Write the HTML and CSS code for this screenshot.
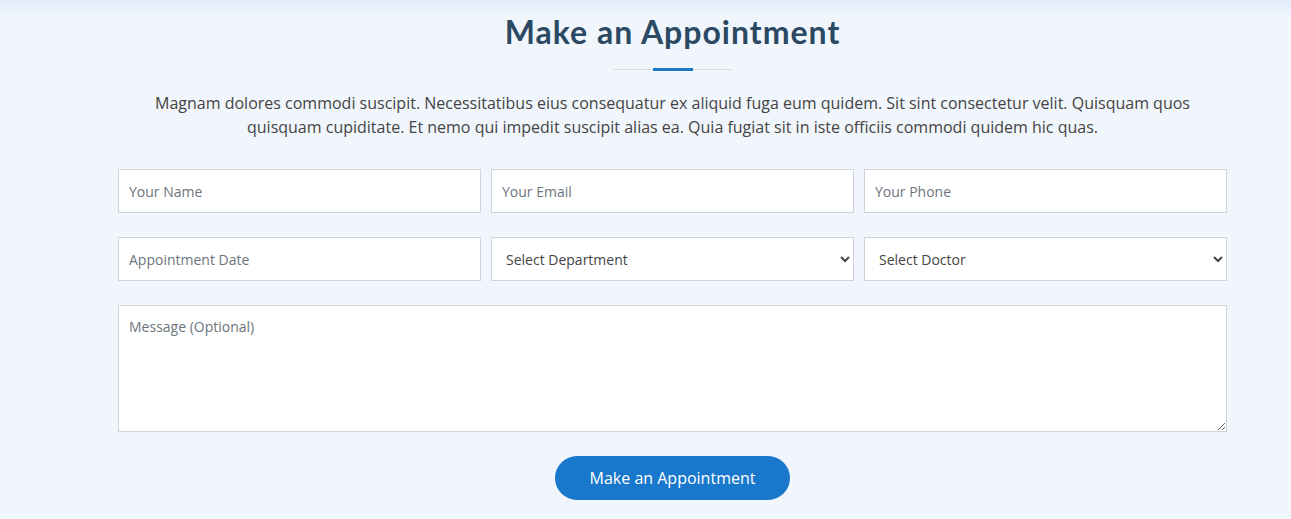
FILE: index.html
```html
<!DOCTYPE html>
<html lang="en">
<head>
<meta charset="utf-8">
<title>Make an Appointment</title>
<link rel="stylesheet" href="styles.css">
</head>
<body>
<section class="appointment">
  <div class="section-title">
    <h2>Make an Appointment</h2>
    <div class="divider"><span class="bar"></span></div>
    <p>Magnam dolores commodi suscipit. Necessitatibus eius consequatur ex aliquid fuga eum quidem. Sit sint consectetur velit. Quisquam quos quisquam cupiditate. Et nemo qui impedit suscipit alias ea. Quia fugiat sit in iste officiis commodi quidem hic quas.</p>
  </div>
  <form class="form">
    <div class="row">
      <input type="text" class="field" placeholder="Your Name">
      <input type="email" class="field" placeholder="Your Email">
      <input type="tel" class="field" placeholder="Your Phone">
    </div>
    <div class="row">
      <input type="text" class="field" placeholder="Appointment Date">
      <select class="field select">
        <option>Select Department</option>
      </select>
      <select class="field select">
        <option>Select Doctor</option>
      </select>
    </div>
    <textarea class="field message" placeholder="Message (Optional)"></textarea>
    <div class="actions">
      <button type="button" class="btn">Make an Appointment</button>
    </div>
  </form>
</section>
</body>
</html>
```
FILE: styles.css
```css
html, body {
  margin: 0;
  padding: 0;
}
body {
  background: linear-gradient(to bottom, #e1ecf8 0px, #f1f6fd 16px, #f1f6fd 100%);
  font-family: "Open Sans", sans-serif;
  color: #444444;
  height: 519px;
  overflow: hidden;
}
.appointment {
  width: 1109px;
  margin-left: 118px;
  padding-top: 12px;
}
.section-title {
  text-align: center;
}
.section-title h2 {
  margin: 0;
  font-family: Lato, "Open Sans", sans-serif;
  font-size: 32px;
  line-height: 40px;
  font-weight: 700;
  letter-spacing: 1px;
  color: #2c4964;
}
.divider {
  position: relative;
  width: 120px;
  height: 1px;
  background: #dddddd;
  margin: 17px auto 0;
}
.divider .bar {
  position: absolute;
  left: 40px;
  top: -1px;
  width: 40px;
  height: 3px;
  background: #1977cc;
}
.section-title p {
  margin: 21px 20px 0;
  font-size: 16px;
  line-height: 24px;
  color: #444444;
}
.form {
  margin-top: 30px;
}
.row {
  display: grid;
  grid-template-columns: repeat(3, 1fr);
  gap: 10px;
  margin-bottom: 24px;
}
.field {
  box-sizing: border-box;
  height: 44px;
  border: 1px solid #ced4da;
  border-radius: 0;
  background: #ffffff;
  padding: 10px;
  font-family: "Open Sans", sans-serif;
  font-size: 14px;
  color: #444444;
  outline: none;
  width: 100%;
}
.field::placeholder {
  color: #6c757d;
}
.message {
  display: block;
  height: 127px;
  line-height: 1.5;
  resize: vertical;
}
.actions {
  text-align: center;
  margin-top: 24px;
}
.btn {
  background: #1977cc;
  border: 0;
  border-radius: 50px;
  color: #ffffff;
  font-family: "Open Sans", sans-serif;
  font-size: 16px;
  width: 235px;
  height: 44px;
  cursor: pointer;
}
```
